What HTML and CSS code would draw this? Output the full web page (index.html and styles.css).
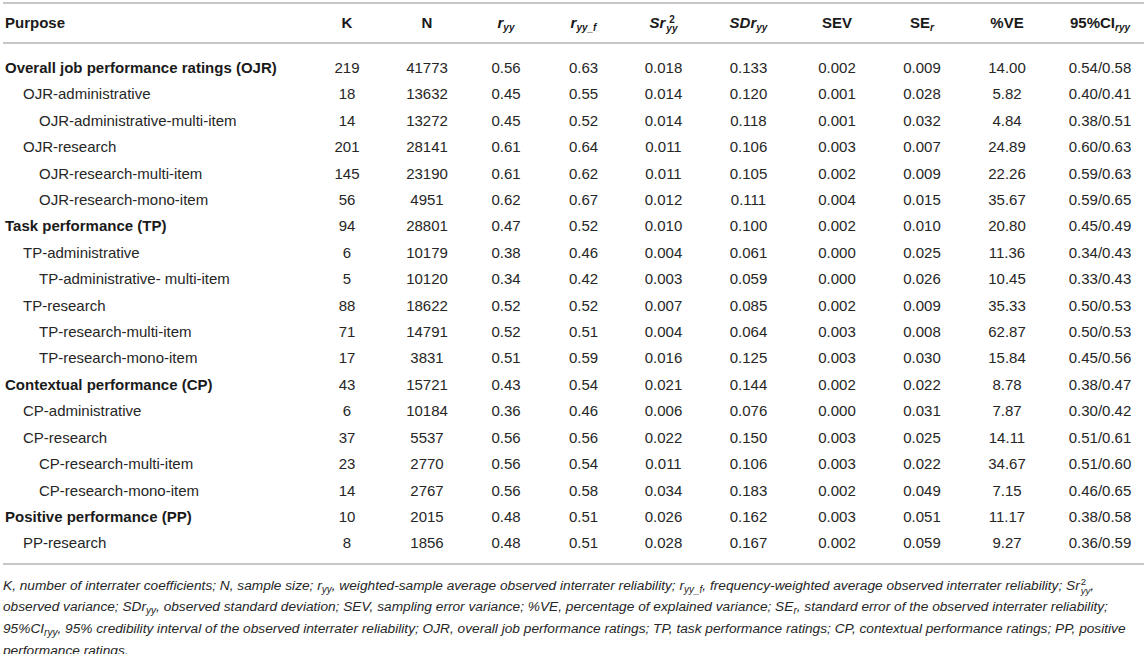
FILE: index.html
```html
<!DOCTYPE html>
<html>
<head>
<meta charset="utf-8">
<link rel="stylesheet" href="styles.css">
</head>
<body>
<div class="wrap">
<table class="tbl">
<colgroup>
<col class="c-purpose"><col class="c-k"><col class="c-n"><col class="c-r"><col class="c-rf"><col class="c-sr"><col class="c-sd"><col class="c-sev"><col class="c-se"><col class="c-ve"><col class="c-ci">
</colgroup>
<thead>
<tr>
<th class="purpose">Purpose</th>
<th>K</th>
<th>N</th>
<th><i>r<sub>yy</sub></i></th>
<th><i>r<sub>yy_f</sub></i></th>
<th><i>Sr<span class="supsub"><span class="sp">2</span><span class="sb">yy</span></span></i></th>
<th><i>SDr<sub>yy</sub></i></th>
<th>SEV</th>
<th>SE<sub><i>r</i></sub></th>
<th>%VE</th>
<th class="ci">95%CI<sub><i>ryy</i></sub></th>
</tr>
</thead>
<tbody>
<tr class="first"><td class="purpose lv0">Overall job performance ratings (OJR)</td><td>219</td><td>41773</td><td>0.56</td><td>0.63</td><td>0.018</td><td>0.133</td><td>0.002</td><td>0.009</td><td>14.00</td><td class="ci">0.54/0.58</td></tr>
<tr><td class="purpose lv1">OJR-administrative</td><td>18</td><td>13632</td><td>0.45</td><td>0.55</td><td>0.014</td><td>0.120</td><td>0.001</td><td>0.028</td><td>5.82</td><td class="ci">0.40/0.41</td></tr>
<tr><td class="purpose lv2">OJR-administrative-multi-item</td><td>14</td><td>13272</td><td>0.45</td><td>0.52</td><td>0.014</td><td>0.118</td><td>0.001</td><td>0.032</td><td>4.84</td><td class="ci">0.38/0.51</td></tr>
<tr><td class="purpose lv1">OJR-research</td><td>201</td><td>28141</td><td>0.61</td><td>0.64</td><td>0.011</td><td>0.106</td><td>0.003</td><td>0.007</td><td>24.89</td><td class="ci">0.60/0.63</td></tr>
<tr><td class="purpose lv2">OJR-research-multi-item</td><td>145</td><td>23190</td><td>0.61</td><td>0.62</td><td>0.011</td><td>0.105</td><td>0.002</td><td>0.009</td><td>22.26</td><td class="ci">0.59/0.63</td></tr>
<tr><td class="purpose lv2">OJR-research-mono-item</td><td>56</td><td>4951</td><td>0.62</td><td>0.67</td><td>0.012</td><td>0.111</td><td>0.004</td><td>0.015</td><td>35.67</td><td class="ci">0.59/0.65</td></tr>
<tr><td class="purpose lv0">Task performance (TP)</td><td>94</td><td>28801</td><td>0.47</td><td>0.52</td><td>0.010</td><td>0.100</td><td>0.002</td><td>0.010</td><td>20.80</td><td class="ci">0.45/0.49</td></tr>
<tr><td class="purpose lv1">TP-administrative</td><td>6</td><td>10179</td><td>0.38</td><td>0.46</td><td>0.004</td><td>0.061</td><td>0.000</td><td>0.025</td><td>11.36</td><td class="ci">0.34/0.43</td></tr>
<tr><td class="purpose lv2">TP-administrative- multi-item</td><td>5</td><td>10120</td><td>0.34</td><td>0.42</td><td>0.003</td><td>0.059</td><td>0.000</td><td>0.026</td><td>10.45</td><td class="ci">0.33/0.43</td></tr>
<tr><td class="purpose lv1">TP-research</td><td>88</td><td>18622</td><td>0.52</td><td>0.52</td><td>0.007</td><td>0.085</td><td>0.002</td><td>0.009</td><td>35.33</td><td class="ci">0.50/0.53</td></tr>
<tr><td class="purpose lv2">TP-research-multi-item</td><td>71</td><td>14791</td><td>0.52</td><td>0.51</td><td>0.004</td><td>0.064</td><td>0.003</td><td>0.008</td><td>62.87</td><td class="ci">0.50/0.53</td></tr>
<tr><td class="purpose lv2">TP-research-mono-item</td><td>17</td><td>3831</td><td>0.51</td><td>0.59</td><td>0.016</td><td>0.125</td><td>0.003</td><td>0.030</td><td>15.84</td><td class="ci">0.45/0.56</td></tr>
<tr><td class="purpose lv0">Contextual performance (CP)</td><td>43</td><td>15721</td><td>0.43</td><td>0.54</td><td>0.021</td><td>0.144</td><td>0.002</td><td>0.022</td><td>8.78</td><td class="ci">0.38/0.47</td></tr>
<tr><td class="purpose lv1">CP-administrative</td><td>6</td><td>10184</td><td>0.36</td><td>0.46</td><td>0.006</td><td>0.076</td><td>0.000</td><td>0.031</td><td>7.87</td><td class="ci">0.30/0.42</td></tr>
<tr><td class="purpose lv1">CP-research</td><td>37</td><td>5537</td><td>0.56</td><td>0.56</td><td>0.022</td><td>0.150</td><td>0.003</td><td>0.025</td><td>14.11</td><td class="ci">0.51/0.61</td></tr>
<tr><td class="purpose lv2">CP-research-multi-item</td><td>23</td><td>2770</td><td>0.56</td><td>0.54</td><td>0.011</td><td>0.106</td><td>0.003</td><td>0.022</td><td>34.67</td><td class="ci">0.51/0.60</td></tr>
<tr><td class="purpose lv2">CP-research-mono-item</td><td>14</td><td>2767</td><td>0.56</td><td>0.58</td><td>0.034</td><td>0.183</td><td>0.002</td><td>0.049</td><td>7.15</td><td class="ci">0.46/0.65</td></tr>
<tr><td class="purpose lv0">Positive performance (PP)</td><td>10</td><td>2015</td><td>0.48</td><td>0.51</td><td>0.026</td><td>0.162</td><td>0.003</td><td>0.051</td><td>11.17</td><td class="ci">0.38/0.58</td></tr>
<tr class="last"><td class="purpose lv1">PP-research</td><td>8</td><td>1856</td><td>0.48</td><td>0.51</td><td>0.028</td><td>0.167</td><td>0.002</td><td>0.059</td><td>9.27</td><td class="ci">0.36/0.59</td></tr>
</tbody>
</table>
<p class="note"><span class="ln"><i>K</i>, number of interrater coefficients; <i>N</i>, sample size; r<sub>yy</sub>, weighted-sample average observed interrater reliability; r<sub>yy_f</sub>, frequency-weighted average observed interrater reliability; Sr<span class="supsub"><span class="sp">2</span><span class="sb">yy</span></span>,</span>
<span class="ln">observed variance; SDr<sub>yy</sub>, observed standard deviation; SEV, sampling error variance; %VE, percentage of explained variance; SE<sub>r</sub>, standard error of the observed interrater reliability;</span>
<span class="ln">95%CI<sub>ryy</sub>, 95% credibility interval of the observed interrater reliability; OJR, overall job performance ratings; TP, task performance ratings; CP, contextual performance ratings; PP, positive</span>
<span class="ln">performance ratings.</span></p>
</div>
</body>
</html>
```

FILE: styles.css
```css
html, body {
  margin: 0;
  padding: 0;
  background: #ffffff;
}
body {
  font-family: "Liberation Sans", Arial, Helvetica, sans-serif;
  color: #262626;
  overflow: hidden;
}
.wrap {
  padding: 2px 0 0 3px;
  width: 1141px;
}
.tbl {
  width: 1141px;
  border-collapse: collapse;
  table-layout: fixed;
  font-size: 15px;
  border-top: 2px solid #c8c8c8;
  border-bottom: 2px solid #c8c8c8;
}
.c-purpose { width: 304px; }
.c-k { width: 80px; }
.c-n { width: 80px; }
.c-r { width: 78px; }
.c-rf { width: 77px; }
.c-sr { width: 83px; }
.c-sd { width: 87px; }
.c-sev { width: 90px; }
.c-se { width: 80px; }
.c-ve { width: 90px; }
.c-ci { width: 92px; }

.tbl thead th {
  height: 38px;
  padding: 0;
  font-weight: bold;
  text-align: center;
  vertical-align: middle;
  color: #1a1a1a;
  border-bottom: 2px solid #c8c8c8;
  white-space: nowrap;
  line-height: 18px;
}
.tbl th.purpose { text-align: left; padding-left: 2px; }
.tbl sub,
.note sub {
  font-size: 10px;
  vertical-align: -3px;
  line-height: 0;
}
.supsub {
  display: inline-block;
  vertical-align: -4px;
  font-size: 10px;
  line-height: 9px;
  margin-left: 1px;
}
.supsub .sp,
.supsub .sb {
  display: block;
}
.supsub .sp { font-style: normal; }

.tbl td {
  padding: 0;
  height: 26.4px;
  line-height: 26.4px;
  text-align: center;
  white-space: nowrap;
  vertical-align: middle;
}
.tbl tr.first td { padding-top: 11px; }
.tbl tr.last td { padding-bottom: 6px; }
.tbl td.purpose { text-align: left; }
.tbl .ci { padding-left: 4px; }
.lv0 { padding-left: 2px !important; font-weight: bold; color: #1a1a1a; }
.lv1 { padding-left: 20px !important; }
.lv2 { padding-left: 36px !important; }

.note {
  margin: 10px 0 0 0;
  font-size: 13.7px;
  font-style: italic;
  line-height: 21.7px;
  color: #262626;
}
.note .ln {
  display: block;
  height: 21.7px;
  white-space: nowrap;
}
.note .supsub {
  font-size: 9.5px;
  line-height: 8.5px;
  vertical-align: -4px;
}
```
